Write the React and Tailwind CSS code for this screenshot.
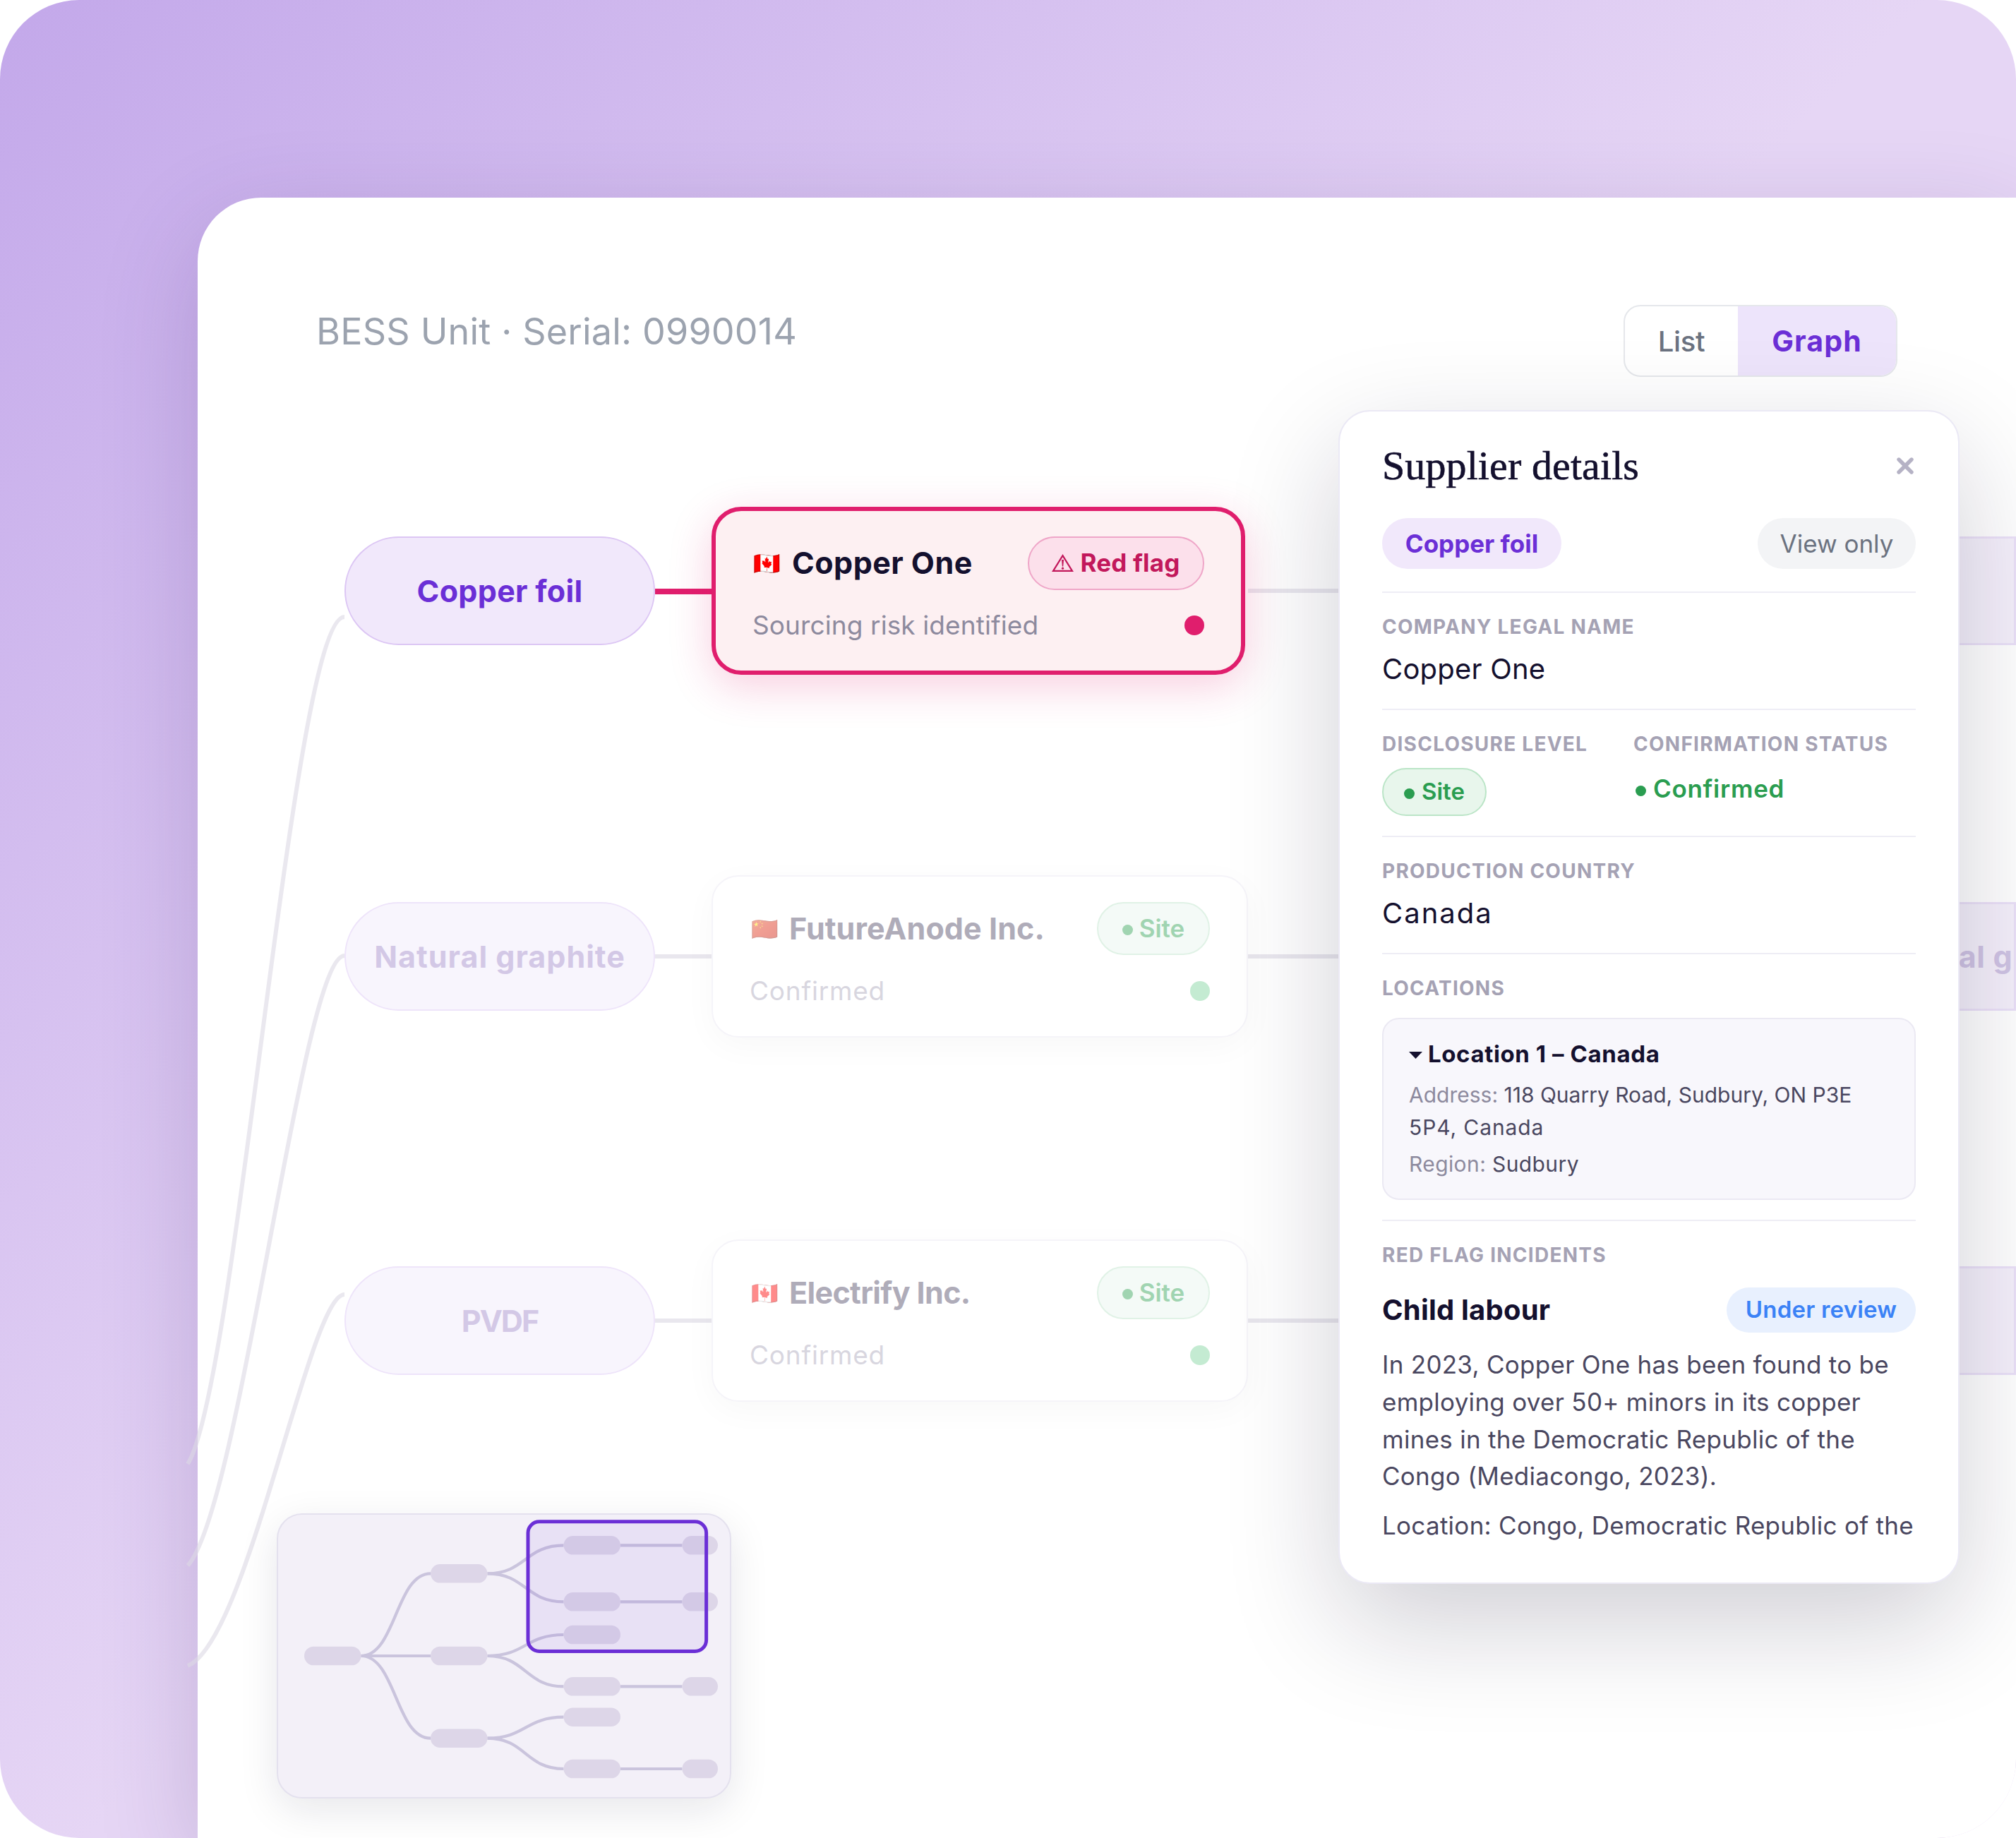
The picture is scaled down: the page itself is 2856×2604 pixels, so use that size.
import { X } from 'lucide-react';

// Rows of the supply graph, top to bottom
const ROWS = [
  {
    id: 'copper',
    material: 'Copper foil',
    supplier: 'Copper One',
    country: '🇨🇦',
    status: 'Sourcing risk identified',
    flagged: true,
    nodePos: 'top-[760px]',
    linkPos: 'top-[834px]',
    cardPos: 'top-[718px]',
    labelTracking: 'tracking-[0.3px]',
    nameTracking: 'tracking-[0.45px]',
    overflowLabel: '',
  },
  {
    id: 'graphite',
    material: 'Natural graphite',
    supplier: 'FutureAnode Inc.',
    country: '🇨🇳',
    status: 'Confirmed',
    flagged: false,
    nodePos: 'top-[1278px]',
    linkPos: 'top-[1352px]',
    cardPos: 'top-[1240px]',
    labelTracking: 'tracking-[1px]',
    nameTracking: 'tracking-[0.1px]',
    overflowLabel: 'Natural graphite',
  },
  {
    id: 'pvdf',
    material: 'PVDF',
    supplier: 'Electrify Inc.',
    country: '🇨🇦',
    status: 'Confirmed',
    flagged: false,
    nodePos: 'top-[1794px]',
    linkPos: 'top-[1868px]',
    cardPos: 'top-[1756px]',
    labelTracking: 'tracking-[-2px]',
    nameTracking: 'tracking-[-0.65px]',
    overflowLabel: '',
  },
];

const MAP_NODES = [
  [39, 202, 80.5],
  [218, 85.3, 80.5],
  [218, 202, 80.5],
  [218, 318.7, 80.5],
  [406.5, 45.3, 80.5],
  [406.5, 125.3, 80.5],
  [406.5, 172, 80.5],
  [406.5, 245.3, 80.5],
  [406.5, 288.7, 80.5],
  [406.5, 362, 80.5],
  [574.5, 45.3, 50.5],
  [574.5, 125.3, 50.5],
  [574.5, 245.3, 50.5],
  [574.5, 362, 50.5],
];

const MAP_LINKS = [
  [119.5, 202, 218, 85.3],
  [119.5, 202, 218, 202],
  [119.5, 202, 218, 318.7],
  [298.5, 85.3, 406.5, 45.3],
  [298.5, 85.3, 406.5, 125.3],
  [298.5, 202, 406.5, 172],
  [298.5, 202, 406.5, 245.3],
  [298.5, 318.7, 406.5, 288.7],
  [298.5, 318.7, 406.5, 362],
  [487, 45.3, 574.5, 45.3],
  [487, 125.3, 574.5, 125.3],
  [487, 245.3, 574.5, 245.3],
  [487, 362, 574.5, 362],
];

const WarningIcon = () => (
  <svg width="31" height="25" viewBox="0 0 31 25" fill="none" className="shrink-0">
    <path d="M15.5 2.2 L29 23.8 H2 Z" stroke="#c2185b" strokeWidth="2.2" />
    <path d="M14 8 H17 L16.2 17.6 H14.8 Z" fill="#c2185b" />
    <circle cx="15.5" cy="20.2" r="1.6" fill="#c2185b" />
  </svg>
);

const MaterialNode = ({ row }) => (
  <div
    className={`absolute left-[488px] flex h-[154px] w-[440px] items-center justify-center rounded-full border-2 text-[43px] font-bold whitespace-nowrap ${row.nodePos} ${row.labelTracking} ${
      row.flagged
        ? 'border-[#dcc6f4] bg-[#f1e8fb] text-[#6b2fd6]'
        : 'border-[#eee4fa] bg-[#f8f5fd] text-[#d3c8e6]'
    }`}
  >
    {row.material}
  </div>
);

const SupplierCard = ({ row }) => {
  if (row.flagged) {
    return (
      <div className={`absolute left-[1008px] flex h-[238px] w-[756px] flex-col gap-[23px] rounded-[42px] border-6 border-[#e01e6d] bg-[#fdf0f2] px-[52px] pt-9 shadow-[0_16px_60px_rgba(224,30,109,0.22)] ${row.cardPos}`}>
        <div className="flex h-[75px] items-center">
          <span className="ml-px w-[37px] text-[31px] leading-none">{row.country}</span>
          <span className={`ml-[18px] text-[43px] font-bold text-[#14102e] ${row.nameTracking}`}>{row.supplier}</span>
          <span className="ml-auto flex h-[76px] w-[250px] items-center justify-center gap-[9px] rounded-full border-2 border-[#efa6c8] bg-[#fce0eb] text-[35px] font-bold tracking-[0.2px] text-[#c2185b]">
            <WarningIcon />
            Red flag
          </span>
        </div>
        <div className="flex h-14 items-center justify-between">
          <span className="text-[37px] tracking-[0.1px] text-[#8d8a9e]">{row.status}</span>
          <span className="size-7 rounded-full bg-[#e01e6d]" />
        </div>
      </div>
    );
  }

  return (
    <div className={`absolute left-[1008px] flex h-[230px] w-[760px] flex-col gap-[23px] rounded-[38px] border-2 border-[#f5f4f9] bg-white px-[52px] pt-9 shadow-[0_12px_48px_rgba(20,16,46,0.03)] ${row.cardPos}`}>
      <div className="flex h-[75px] items-center">
        <span className="ml-0.5 w-[37px] text-[31px] leading-none opacity-45">{row.country}</span>
        <span className={`ml-[17px] text-[43px] font-bold text-[#afacb9] ${row.nameTracking}`}>{row.supplier}</span>
        <span className="ml-auto flex h-[75px] w-40 items-center justify-center gap-[9px] rounded-full border-2 border-[#e0f2e6] bg-[#f4faf7] text-[35px] font-semibold text-[#a0d4b1]">
          <span className="mt-1 size-[15px] rounded-full bg-[#a0d4b1]" />
          Site
        </span>
      </div>
      <div className="flex h-14 items-center justify-between">
        <span className="text-[37px] tracking-[0.8px] text-[#d8d6df]">{row.status}</span>
        <span className="size-7 rounded-full bg-[#c4ebd2]" />
      </div>
    </div>
  );
};

const MiniMap = () => (
  <div className="absolute top-[2144px] left-[392px] h-[404px] w-[644px] rounded-[36px] border-2 border-[#e4e1ee] bg-[#f3f0f8] shadow-[0_16px_56px_rgba(20,16,46,0.1)]">
    <svg width="644" height="404" viewBox="0 0 644 404" fill="none" className="-m-0.5 block">
      {MAP_LINKS.map(([x1, y1, x2, y2], i) => {
        const mid = (x1 + x2) / 2;
        return <path key={i} d={`M${x1} ${y1} C${mid} ${y1} ${mid} ${y2} ${x2} ${y2}`} stroke="#cac4dd" strokeWidth="4.2" />;
      })}
      {MAP_NODES.map(([x, cy, w], i) => (
        <rect key={i} x={x} y={cy - 13.3} width={w} height="26.6" rx="13.3" fill="#ddd6e8" />
      ))}
      {/* Visible part of the graph */}
      <rect x="356" y="11.8" width="252.6" height="183.6" rx="16" fill="#6b2fd6" fillOpacity="0.08" stroke="#6b2fd6" strokeWidth="5" />
    </svg>
  </div>
);

const Label = ({ children }) => (
  <div className="h-11 text-[28px] leading-[44px] font-bold tracking-[1.25px] whitespace-nowrap text-[#a5a2b4] uppercase">{children}</div>
);

const SupplierDetails = () => (
  <div className="absolute top-[581px] left-[1896px] flex h-[1663px] w-[880px] flex-col rounded-[45px] border-2 border-[#ebe9f5] bg-white px-[60px] pt-[41px] shadow-[0_56px_160px_rgba(20,16,46,0.2)]">
    <div className="flex h-[70px] items-center justify-between">
      <h2 className="pt-0.5 font-['Liberation_Serif',serif] text-[58px] leading-[70px] tracking-[0.1px] text-[#14102e] [-webkit-text-stroke:0.6px_#14102e]">Supplier details</h2>
      <X size={36} strokeWidth={3.6} className="-mr-[3px] mt-0.5 text-[#b5b2c5]" />
    </div>

    <div className="mt-10 mb-8 flex h-[72px] justify-between text-[35px]">
      <span className="flex w-[254px] items-center justify-center rounded-full bg-[#f1e8fb] font-bold text-[#6b2fd6]">Copper foil</span>
      <span className="flex w-56 items-center justify-center rounded-full bg-[#f3f4f6] text-[#6b7280]">View only</span>
    </div>

    <div className="border-t-2 border-[#eeedf5] pt-[26px] pb-[27px]">
      <Label>Company legal name</Label>
      <div className="mt-[9px] text-[40px] leading-[58px] tracking-[0.2px] text-[#14102e]">Copper One</div>
    </div>

    <div className="flex border-t-2 border-[#eeedf5] pt-[26px] pb-7">
      <div className="w-[356px]">
        <Label>Disclosure level</Label>
        <div className="mt-3 flex h-[68px] w-[148px] items-center justify-center gap-2.5 rounded-full border-2 border-[#bbe5c7] bg-[#e8f6ec] text-[33px] font-semibold text-[#2a9d50]">
          <span className="mt-1 size-[15px] rounded-full bg-[#2a9d50]" />
          Site
        </div>
      </div>
      <div>
        <Label>Confirmation status</Label>
        <div className="mt-3 ml-[3px] flex h-[59px] items-center gap-2.5 text-[35px] font-semibold tracking-[0.7px] text-[#2a9d50]">
          <span className="mt-1.5 size-[15px] rounded-full bg-[#2a9d50]" />
          Confirmed
        </div>
      </div>
    </div>

    <div className="border-t-2 border-[#eeedf5] pt-[26px] pb-[27px]">
      <Label>Production country</Label>
      <div className="mt-[9px] text-[40px] leading-[58px] tracking-[2px] text-[#14102e]">Canada</div>
    </div>

    <div className="border-t-2 border-[#eeedf5] pt-[26px] pb-7">
      <Label>Locations</Label>
      <div className="mt-5 h-[258px] rounded-3xl border-2 border-[#ebe9f3] bg-[#f8f7fc] px-9 pt-6 text-[30px] leading-[46px] text-[#4a4760]">
        <div className="flex h-[50px] items-center gap-2 text-[33px] font-bold tracking-[0.6px] text-[#14102e]">
          <svg width="19" height="10" viewBox="0 0 19 10" className="mt-1">
            <path d="M0 0 H19 L9.5 10 Z" fill="#14102e" />
          </svg>
          Location 1 – Canada
        </div>
        <div className="mt-2.5">
          <span className="text-[#8d8a9e]">Address:</span> 118 Quarry Road, Sudbury, ON P3E
          <br />
          <span className="tracking-[0.9px]">5P4, Canada</span>
        </div>
        <div className="mt-1.5 tracking-[0.4px]">
          <span className="text-[#8d8a9e]">Region:</span> Sudbury
        </div>
      </div>
    </div>

    <div className="border-t-2 border-[#eeedf5] pt-[26px]">
      <Label>Red flag incidents</Label>
      <div className="mt-6 flex h-16 items-center justify-between">
        <span className="text-[40px] font-bold tracking-[0.2px] text-[#14102e]">Child labour</span>
        <span className="flex h-16 w-[268px] items-center justify-center rounded-full bg-[#e8f0fe] text-[33px] font-semibold tracking-[0.2px] text-[#3b82f6]">Under review</span>
      </div>
      <p className="mt-[19px] text-[35px] leading-[52.8px] tracking-[0.28px] text-[#4a4760]">
        In 2023, Copper One has been found to be employing over 50+ minors in its copper mines in the Democratic Republic of the Congo (Mediacongo, 2023).
      </p>
      <p className="mt-[17px] text-[35px] leading-[52.8px] tracking-[0.28px] whitespace-nowrap text-[#4a4760]">
        Location: Congo, Democratic Republic of the
      </p>
    </div>
  </div>
);

export default function App() {
  return (
    <div className="relative h-[2604px] w-[2856px] overflow-hidden rounded-[112px] bg-[linear-gradient(135deg,#c3a8ea_0%,#e6d6f5_50%,#e6d6f5_100%)] pt-[280px] pl-[280px] font-['Inter',sans-serif]">
      <div className="h-full rounded-tl-[90px] bg-white px-[168px] pt-[152px] shadow-[0_40px_140px_rgba(60,30,110,0.2)]">
        <div className="flex items-start justify-between">
          <h1 className="text-[52px] leading-[75px] tracking-[0.2px] text-[#9ca3af]">BESS Unit · Serial: 0990014</h1>
          <div className="flex h-[102px] w-[388px] overflow-hidden rounded-3xl border-2 border-[#e5e7eb] text-[40px]">
            <button className="w-40 pt-0.5 font-medium tracking-[-0.3px] text-[#6b7280]">List</button>
            <button className="flex-1 bg-[#ede4fb] pt-0.5 text-[41px] font-bold tracking-[1.1px] text-[#6b2fd6]">Graph</button>
          </div>
        </div>
      </div>

      {/* Links coming from the previous column */}
      <svg width="2856" height="2604" viewBox="0 0 2856 2604" fill="none" className="absolute top-0 left-0">
        <g stroke="#dcd8e4" strokeOpacity="0.6" strokeWidth="6">
          <path d="M266 2074 C336 1962 415 874 488 874" />
          <path d="M266 2218 C341 2136 428 1354 488 1354" />
          <path d="M266 2360 C351 2326 438 1834 488 1834" />
        </g>
      </svg>

      {ROWS.map((row) => (
        <div key={row.id}>
          <div className={`absolute left-[928px] w-20 ${row.linkPos} ${row.flagged ? 'h-2 bg-[#e01e6d]' : 'h-1.5 bg-[#e9e7ee]'}`} />
          <div className={`absolute left-[1768px] h-1.5 w-[200px] bg-[#e9e7ee] ${row.linkPos}`} />
          <MaterialNode row={row} />
          <SupplierCard row={row} />
          <div className={`absolute left-[2614px] flex h-[154px] w-[242px] items-center overflow-hidden border-3 border-[#ebe1f8] bg-[#f5f0fb] pl-[37px] text-[43px] font-bold tracking-[0.7px] whitespace-nowrap text-[#d0c4e4] ${row.nodePos}`}>
            {row.overflowLabel}
          </div>
        </div>
      ))}

      <MiniMap />
      <SupplierDetails />
    </div>
  );
}
